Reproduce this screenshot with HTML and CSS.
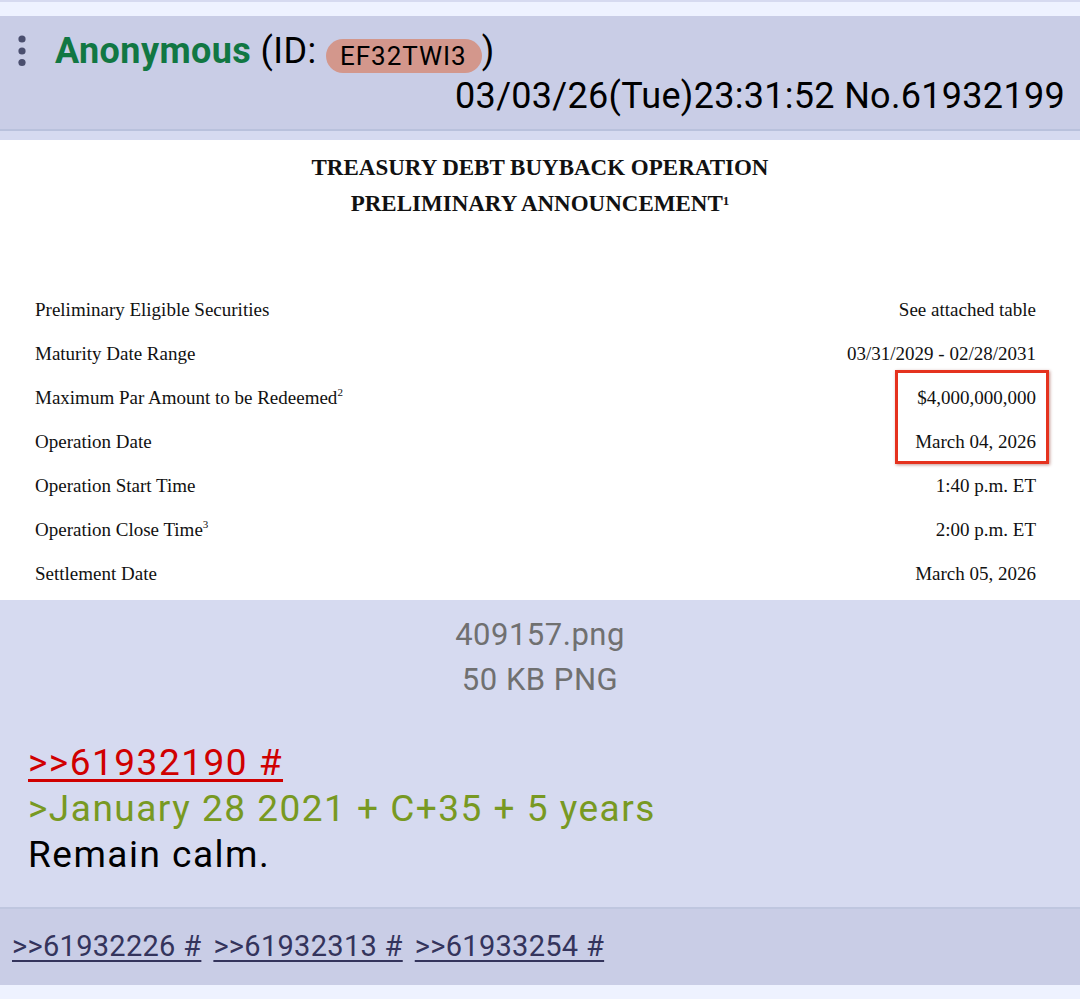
FILE: index.html
```html
<!DOCTYPE html>
<html lang="en">
<head>
<meta charset="utf-8">
<title>Anonymous No.61932199</title>
<link rel="stylesheet" href="styles.css">
</head>
<body>
<div class="prev-edge"></div>
<article class="post">
  <header class="post-header">
    <div class="name-line">
      <svg class="menu-dots" width="10" height="32" viewBox="0 0 10 32" aria-hidden="true">
        <circle cx="5" cy="4" r="3.6"/>
        <circle cx="5" cy="16" r="3.6"/>
        <circle cx="5" cy="27.5" r="3.6"/>
      </svg><span class="name">Anonymous</span> (ID: <span class="poster-id">EF32TWI3</span>)
    </div>
    <div class="date-line">03/03/26(Tue)23:31:52 No.61932199</div>
  </header>
  <div class="header-gap"></div>
  <figure class="doc">
    <div class="doc-title">
      <div>TREASURY DEBT BUYBACK OPERATION</div>
      <div>PRELIMINARY ANNOUNCEMENT<sup class="t-sup">1</sup></div>
    </div>
    <div class="doc-rows">
      <div class="doc-row"><span>Preliminary Eligible Securities</span><span>See attached table</span></div>
      <div class="doc-row"><span>Maturity Date Range</span><span>03/31/2029 - 02/28/2031</span></div>
      <div class="doc-row"><span>Maximum Par Amount to be Redeemed<sup>2</sup></span><span>$4,000,000,000</span></div>
      <div class="doc-row"><span>Operation Date</span><span>March 04, 2026</span></div>
      <div class="doc-row"><span>Operation Start Time</span><span>1:40 p.m. ET</span></div>
      <div class="doc-row"><span>Operation Close Time<sup>3</sup></span><span>2:00 p.m. ET</span></div>
      <div class="doc-row"><span>Settlement Date</span><span>March 05, 2026</span></div>
    </div>
    <div class="highlight-box"></div>
  </figure>
  <div class="post-body">
    <div class="file-info">
      <div>409157.png</div>
      <div>50 KB PNG</div>
    </div>
    <blockquote class="message">
      <a class="quotelink" href="#p61932190">&gt;&gt;61932190 #</a><br>
      <span class="greentext">&gt;January 28 2021 + C+35 + 5 years</span><br>
      Remain calm.
    </blockquote>
  </div>
  <footer class="post-footer">
    <a class="backlink" href="#p61932226">&gt;&gt;61932226 #</a>
    <a class="backlink" href="#p61932313">&gt;&gt;61932313 #</a>
    <a class="backlink" href="#p61933254">&gt;&gt;61933254 #</a>
  </footer>
</article>
</body>
</html>
```
FILE: styles.css
```css
html, body {
  margin: 0;
  padding: 0;
}
body {
  background: #eef2ff;
  font-family: Roboto, "Noto Sans", "Liberation Sans", sans-serif;
  color: #000;
  width: 1080px;
  height: 999px;
  overflow: hidden;
}
.prev-edge {
  height: 2px;
  background: #d6daf0;
}
.post {
  margin: 14px 0 0;
}
.post-header {
  background: #c9cde6;
  border-bottom: 2px solid #b9c1dc;
  padding: 13px 15px 10px 17px;
  font-size: 36px;
  line-height: 45px;
}
.name-line {
  white-space: nowrap;
  letter-spacing: 0.4px;
  height: 45px;
}
.menu-dots {
  fill: #4a4e6e;
  vertical-align: -4px;
  margin-right: 28px;
}
.name {
  color: #117743;
  font-weight: 700;
}
.poster-id {
  display: inline-block;
  background: #d3978c;
  border-radius: 17px;
  height: 34px;
  line-height: 34px;
  padding: 0 15px 0 14px;
  font-size: 26px;
  letter-spacing: 1px;
  vertical-align: -2px;
}
.date-line {
  text-align: right;
  letter-spacing: 0.3px;
}
.header-gap {
  height: 9px;
  background: #d6daf0;
}
.doc {
  position: relative;
  margin: 0;
  height: 460px;
  background: #fff;
  font-family: "Liberation Serif", "Times New Roman", serif;
  color: #111;
  box-sizing: border-box;
  padding-top: 10px;
}
.doc-title {
  text-align: center;
  font-weight: 700;
  font-size: 23px;
  line-height: 36px;
}
.t-sup {
  font-size: 13px;
  vertical-align: 6px;
  line-height: 0;
}
.doc-rows {
  margin-top: 66px;
  font-size: 19px;
  line-height: 44px;
}
.doc-row {
  display: flex;
  justify-content: space-between;
  padding: 0 44px 0 35px;
}
.doc-row sup {
  font-size: 11px;
  line-height: 0;
  vertical-align: 8px;
}
.highlight-box {
  position: absolute;
  left: 895px;
  top: 230px;
  width: 148px;
  height: 88px;
  border: 3px solid #e5321e;
  box-shadow: 1px 1px 3px rgba(120, 20, 10, 0.45);
}
.post-body {
  background: #d6daf0;
  padding: 12px 0 29px;
}
.file-info {
  text-align: center;
  color: #707070;
  font-size: 31px;
  line-height: 45px;
  letter-spacing: 0.5px;
}
.message {
  margin: 38px 0 0;
  padding: 0 0 0 28px;
  font-size: 37px;
  line-height: 46px;
  letter-spacing: 1.5px;
}
.quotelink {
  color: #d00000;
  text-decoration: underline;
  text-decoration-thickness: 3px;
  text-underline-offset: 4px;
}
.greentext {
  color: #789922;
}
.post-footer {
  background: #c9cde6;
  border-top: 2px solid #bfc6df;
  padding: 19px 0 21px 12px;
  font-size: 29px;
  line-height: 36px;
  letter-spacing: 0.3px;
  display: flex;
  gap: 12px;
}
.backlink {
  color: #34345c;
  text-decoration: underline;
  text-decoration-thickness: 2px;
  text-underline-offset: 4px;
}
```
